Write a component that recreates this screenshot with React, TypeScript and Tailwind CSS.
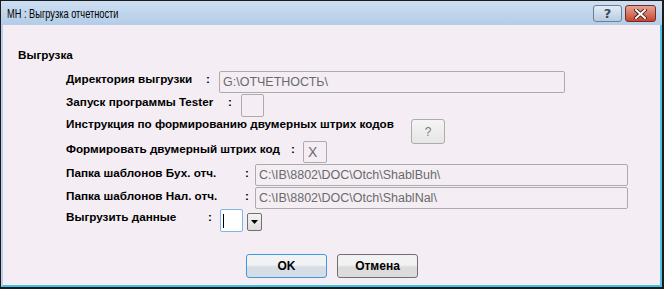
import React from "react";

const label = "font-['Liberation_Sans',Arial,sans-serif] text-[11.7px] font-bold leading-[14px] text-black whitespace-nowrap";
const field =
  "h-full border border-[#acacac] rounded-[2px] bg-[#f4eef4] px-[3px] flex items-center text-[12.5px] text-[#6a6a6a] font-['Liberation_Sans',Arial,sans-serif] whitespace-nowrap overflow-hidden";

function Colon({ w }: { w: string }) {
  return <span className={`${label} ${w}`}>:</span>;
}

export default function App() {
  return (
    <div className="w-[664px] h-[289px] bg-[#1b1b1b] pl-px pr-[2px] pb-[2px] pt-px flex flex-col">
      <div className="flex-1 flex flex-col border-l-2 border-r-2 border-b-2 border-l-[#b8d0e9] border-r-[#4fc3e6] border-b-[#3cc4e8] bg-[#f4eef4]">
        {/* title bar */}
        <div className="h-[24px] -mx-[2px] px-[6px] flex items-center justify-between bg-gradient-to-b from-[#cddff2] to-[#b3cce7]">
          <span className="font-['Liberation_Sans',Arial,sans-serif] text-[12.5px] leading-none text-black mt-[2px] scale-x-[0.74] origin-left whitespace-nowrap">
            МН : Выгрузка отчетности
          </span>
          <div className="flex gap-[3px] self-start mt-[4px]">
            <div className="w-[29px] h-[17px] rounded-[3px] border border-[#6e7f94] bg-gradient-to-b from-[#e3ecf6] to-[#b8cbe0] flex items-center justify-center">
              <span className="font-['DejaVu_Sans',sans-serif] text-[13px] font-bold leading-none text-[#3a4a5c]">?</span>
            </div>
            <div className="w-[31px] h-[17px] rounded-[3px] border border-[#7a2a20] bg-gradient-to-b from-[#e3a595] to-[#c4432e] flex items-center justify-center">
              <svg width="13" height="10" viewBox="0 0 13 10">
                <path d="M2 1 L11 9 M11 1 L2 9" stroke="#3b1510" strokeWidth="3.6" strokeLinecap="square" />
                <path d="M2 1 L11 9 M11 1 L2 9" stroke="#ffffff" strokeWidth="2" strokeLinecap="square" />
              </svg>
            </div>
          </div>
        </div>

        {/* body */}
        <div className="flex flex-col pt-[23px] pl-[15px]">
          <div className={`${label} h-[14px]`}>Выгрузка</div>

          <div className="flex flex-col pl-[48px] mt-[9px]">
            <div className="flex items-start h-[22px]">
              <span className={`${label} w-[140px] mt-px`}>Директория выгрузки</span>
              <Colon w="w-[13px] mt-px" />
              <div className={`${field} w-[346px]`}>G:\ОТЧЕТНОСТЬ\</div>
            </div>

            <div className="flex items-start h-[23px] mt-px">
              <span className={`${label} w-[162px] mt-px`}>Запуск программы Tester</span>
              <Colon w="w-[13px] mt-px" />
              <div className={`${field} w-[23px]`} />
            </div>

            <div className="flex items-start h-[24px]">
              <span className={`${label} w-[345px]`}>Инструкция по формированию двумерных штрих кодов</span>
              <div className="mt-[2px] w-[34px] h-[25px] rounded-[3px] border border-[#acacac] bg-gradient-to-b from-[#f4f4f4] to-[#e6e6e6] flex items-center justify-center font-['Liberation_Sans',Arial,sans-serif] text-[12px] text-[#7a7a7a]">
                ?
              </div>
            </div>

            <div className="flex items-start h-[22px]">
              <span className={`${label} w-[225px] mt-px`}>Формировать двумерный штрих код</span>
              <Colon w="w-[12px] mt-px" />
              <div className={`${field} w-[24px] text-[14px] px-[4px]`}>X</div>
            </div>

            <div className="flex items-start h-[22px] mt-px">
              <span className={`${label} w-[179px] mt-[2px]`}>Папка шаблонов Бух. отч.</span>
              <Colon w="w-[10px] mt-[2px]" />
              <div className={`${field} w-[373px]`}>C:\IB\8802\DOC\Otch\ShablBuh\</div>
            </div>

            <div className="flex items-start h-[22px] mt-px">
              <span className={`${label} w-[179px] mt-[2px]`}>Папка шаблонов Нал. отч.</span>
              <Colon w="w-[10px] mt-[2px]" />
              <div className={`${field} w-[373px]`}>C:\IB\8802\DOC\Otch\ShablNal\</div>
            </div>

            <div className="flex items-start h-[23px]">
              <span className={`${label} w-[142px] mt-px`}>Выгрузить данные</span>
              <Colon w="w-[12px] mt-px" />
              <div className="w-[23px] h-full border border-[#7eb4ea] rounded-[2px] bg-white flex items-center pl-[2px]">
                <div className="w-px h-[14px] bg-black" />
              </div>
              <div className="ml-[4px] mt-[4px] w-[15px] h-[18px] rounded-[2px] border border-[#707070] bg-gradient-to-b from-[#f4f4f4] to-[#dcdcdc] flex items-center justify-center">
                <svg width="7" height="4" viewBox="0 0 7 4">
                  <path d="M0 0 H7 L3.5 4 Z" fill="#000" />
                </svg>
              </div>
            </div>
          </div>

          <div className="flex gap-[10px] mt-[22px] pl-[228px]">
            <div className="w-[81px] h-[24px] rounded-[3px] border border-[#3c9be0] bg-gradient-to-b from-[#f0f2f4] from-45% to-[#d6dde4] to-55% flex items-center justify-center font-['Liberation_Sans',Arial,sans-serif] text-[12px] font-bold text-black">
              OK
            </div>
            <div className="w-[81px] h-[24px] rounded-[3px] border border-[#707070] bg-gradient-to-b from-[#f2f2f2] from-45% to-[#dcdcdc] to-55% flex items-center justify-center font-['Liberation_Sans',Arial,sans-serif] text-[12px] font-bold text-black">
              Отмена
            </div>
          </div>
        </div>
      </div>
    </div>
  );
}
